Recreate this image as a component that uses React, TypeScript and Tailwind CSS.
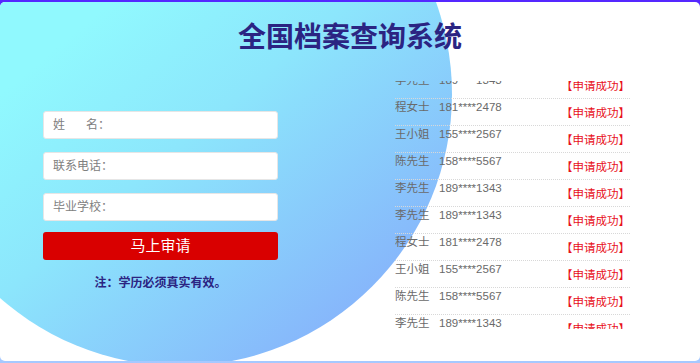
const rows = [
  { name: "李先生", phone: "189****1343" },
  { name: "程女士", phone: "181****2478" },
  { name: "王小姐", phone: "155****2567" },
  { name: "陈先生", phone: "158****5567" },
  { name: "李先生", phone: "189****1343" },
  { name: "李先生", phone: "189****1343" },
  { name: "程女士", phone: "181****2478" },
  { name: "王小姐", phone: "155****2567" },
  { name: "陈先生", phone: "158****5567" },
  { name: "李先生", phone: "189****1343" },
];

function Field({ children }: { children: React.ReactNode }) {
  return (
    <div className="flex h-[28px] items-center rounded-[3px] border border-[#e6e6e6] bg-white px-[9px] text-[12px] text-[#808080]">
      {children}
    </div>
  );
}

export default function App() {
  return (
    <div
      className="h-[363px] w-[700px] bg-gradient-to-b from-[#5527ff] to-[#a6c9ff] py-[2px]"
      style={{ fontFamily: '"Liberation Sans", "Noto Sans CJK SC", sans-serif' }}
    >
      <div className="relative h-full overflow-hidden rounded-[5px] bg-white">
        {/* big decorative circle behind the form */}
        <div className="absolute left-[-92px] top-[-180px] h-[544px] w-[544px] rounded-full bg-[linear-gradient(140deg,#90f9fe_35%,#8ce6fc_55%,#86b3fb_88%)]" />

        <div className="relative">
          <h1 className="pt-[16px] text-center text-[28px] font-bold leading-[40px] text-[#2b2482]">
            全国档案查询系统
          </h1>

          <div className="mt-[23px] flex">
            <div className="ml-[43px] flex w-[235px] flex-col gap-[13px] pt-[30px]">
              <Field>
                <span>姓</span>
                <span className="ml-[21px]">名：</span>
              </Field>
              <Field>联系电话：</Field>
              <Field>毕业学校：</Field>
              <button className="-mt-[2px] h-[28px] rounded-[3px] bg-[#d90000] text-[15px] text-white">马上审请</button>
              <p className="mt-[1px] text-center text-[12px] font-bold leading-[18px] text-[#2b2482]">
                注：学历必须真实有效。
              </p>
            </div>

            <div className="ml-[117px] h-[248px] w-[235px] overflow-hidden">
              <div className="mt-[-9px]">
                {rows.map((r, i) => (
                  <div
                    key={i}
                    className="flex h-[27px] items-start border-b border-dotted border-[#d8d8d8] text-[11.5px] leading-[16px]"
                  >
                    <span className="w-[44px] text-[#6a6a6a]">{r.name}</span>
                    <span className="text-[#6a6a6a]">{r.phone}</span>
                    <span className="ml-auto pt-[6px] text-[#e8101a]">【申请成功】</span>
                  </div>
                ))}
              </div>
            </div>
          </div>
        </div>
      </div>
    </div>
  );
}
